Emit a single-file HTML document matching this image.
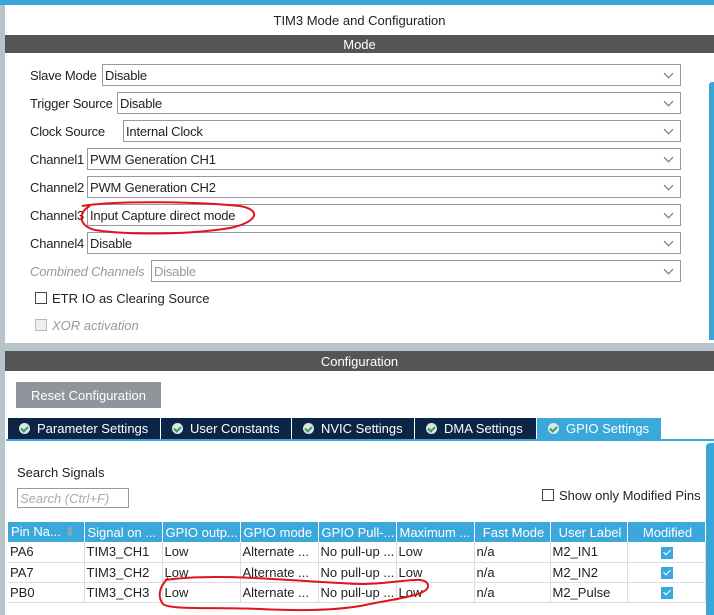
<!DOCTYPE html>
<html><head><style>
*{box-sizing:border-box;margin:0;padding:0}
body{width:714px;height:615px;overflow:hidden;background:#b9c4ca;font-family:"Liberation Sans",Arial,sans-serif;font-size:13px;color:#222;position:relative}
.a{position:absolute}
.hdr{background:#545655;color:#fff;text-align:center;font-size:13px}
.lbl{position:absolute;left:30px;font-size:13px;letter-spacing:-0.2px}
.sel{position:absolute;height:22px;border:1px solid #999;background:#fff;padding-left:2px;line-height:21px;right:33px;letter-spacing:-0.2px}
.sel:after{content:"";position:absolute;right:8px;top:5px;width:6px;height:6px;border-right:1px solid #666;border-bottom:1px solid #666;transform:rotate(45deg)}
.tab{position:absolute;top:418px;height:21px;background:#0c2546;color:#fff;line-height:21px;font-size:13px;padding-left:29px}
.tab i{position:absolute;left:11px;top:5px;width:11px;height:11px;border-radius:50%;background:#d8e8e0}
.tab i:after{content:"";position:absolute;left:3px;top:2px;width:3px;height:5px;border-right:2px solid #3a9a6a;border-bottom:2px solid #3a9a6a;transform:rotate(45deg)}
table{position:absolute;left:8px;top:522px;border-collapse:collapse;font-size:13px;table-layout:fixed}
th{background:#3ba8dc;color:#fff;font-weight:normal;height:20px;border-right:1px solid #fff;text-align:left;padding-left:3px;white-space:nowrap;overflow:hidden}
td{height:20px;border-right:1px solid #ddd;border-bottom:1px solid #ddd;padding-left:2px;white-space:nowrap;overflow:hidden}
.ck{display:inline-block;width:12px;height:12px;background:#3ba8dc;position:relative;vertical-align:middle}
.ck:after{content:"";position:absolute;left:4px;top:1px;width:3px;height:6px;border-right:1.5px solid #fff;border-bottom:1.5px solid #fff;transform:rotate(45deg)}
</style></head><body>
<div class="a" style="left:0;top:0;width:714px;height:5px;background:#3aa6d8"></div>
<div class="a" style="left:5px;top:5px;width:709px;height:338px;background:#fff"></div>
<div class="a" style="left:5px;top:13px;width:709px;text-align:center;font-size:13px">TIM3 Mode and Configuration</div>
<div class="a hdr" style="left:5px;top:35px;width:709px;height:18px;line-height:19px">Mode</div>
<div class="a" style="left:709px;top:82px;width:5px;height:258px;background:#3aa6d8;border-radius:3px 0 0 0"></div>

<div class="lbl" style="top:68px">Slave Mode</div><div class="sel" style="left:102px;top:64px">Disable</div>
<div class="lbl" style="top:96px">Trigger Source</div><div class="sel" style="left:117px;top:92px">Disable</div>
<div class="lbl" style="top:124px">Clock Source</div><div class="sel" style="left:123px;top:120px">Internal Clock</div>
<div class="lbl" style="top:152px">Channel1</div><div class="sel" style="left:87px;top:148px">PWM Generation CH1</div>
<div class="lbl" style="top:180px">Channel2</div><div class="sel" style="left:87px;top:176px">PWM Generation CH2</div>
<div class="lbl" style="top:208px">Channel3</div><div class="sel" style="left:87px;top:204px">Input Capture direct mode</div>
<div class="lbl" style="top:236px">Channel4</div><div class="sel" style="left:87px;top:232px">Disable</div>
<div class="lbl" style="top:264px;color:#999;font-style:italic">Combined Channels</div><div class="sel" style="left:151px;top:260px;color:#999">Disable</div>
<div class="a" style="left:35px;top:292px;width:12px;height:12px;border:1px solid #444"></div>
<div class="a" style="left:52px;top:291px">ETR IO as Clearing Source</div>
<div class="a" style="left:35px;top:319px;width:12px;height:12px;border:1px solid #bbb;background:#eee"></div>
<div class="a" style="left:52px;top:318px;color:#999;font-style:italic">XOR activation</div>

<div class="a" style="left:5px;top:351px;width:709px;height:264px;background:#fff"></div>
<div class="a hdr" style="left:5px;top:351px;width:709px;height:20px;line-height:21px">Configuration</div>
<div class="a" style="left:16px;top:382px;width:145px;height:26px;background:#8f959b;color:#fff;line-height:27px;text-align:center">Reset Configuration</div>
<div class="tab" style="left:8px;width:152px"><i></i>Parameter Settings</div>
<div class="tab" style="left:161px;width:130px"><i></i>User Constants</div>
<div class="tab" style="left:292px;width:122px"><i></i>NVIC Settings</div>
<div class="tab" style="left:415px;width:121px"><i></i>DMA Settings</div>
<div class="tab" style="left:537px;width:124px;background:#3ba8dc;height:22px"><i></i>GPIO Settings</div>
<div class="a" style="left:6px;top:439px;width:708px;height:2px;background:#3ba8dc"></div>
<div class="a" style="left:706px;top:443px;width:8px;height:172px;background:#3aa6d8;border-radius:4px 0 0 0"></div>
<div class="a" style="left:17px;top:465px">Search Signals</div>
<div class="a" style="left:17px;top:488px;width:112px;height:20px;border:1px solid #999;color:#aaa;font-style:italic;padding-left:2px;line-height:19px">Search (Ctrl+F)</div>
<div class="a" style="left:542px;top:489px;width:12px;height:12px;border:1px solid #444"></div>
<div class="a" style="left:559px;top:488px">Show only Modified Pins</div>
<table>
<tr><th style="width:76px">Pin Na... <span style="color:#8ab">⬍</span></th><th style="width:78px">Signal on ...</th><th style="width:78px">GPIO outp...</th><th style="width:78px">GPIO mode</th><th style="width:78px">GPIO Pull-...</th><th style="width:78px">Maximum ...</th><th style="width:76px;text-align:center">Fast Mode</th><th style="width:77px;text-align:center">User Label</th><th style="width:78px;text-align:center">Modified</th></tr>
<tr><td>PA6</td><td>TIM3_CH1</td><td>Low</td><td>Alternate ...</td><td>No pull-up ...</td><td>Low</td><td>n/a</td><td>M2_IN1</td><td style="text-align:center"><span class="ck"></span></td></tr>
<tr><td>PA7</td><td>TIM3_CH2</td><td>Low</td><td>Alternate ...</td><td>No pull-up ...</td><td>Low</td><td>n/a</td><td>M2_IN2</td><td style="text-align:center"><span class="ck"></span></td></tr>
<tr><td>PB0</td><td>TIM3_CH3</td><td>Low</td><td>Alternate ...</td><td>No pull-up ...</td><td>Low</td><td>n/a</td><td>M2_Pulse</td><td style="text-align:center"><span class="ck"></span></td></tr>
</table>
<svg class="a" style="left:0;top:0" width="714" height="615" fill="none" stroke="#e0141c" stroke-width="2">
<path d="M82 206 C120 200 200 202 240 206 C262 210 258 222 230 228 C180 236 120 234 95 230 C78 226 78 212 90 206"/>
<path d="M165 580 C220 572 300 582 360 584 C400 584 425 574 428 585 C430 595 400 598 370 604 C340 611 300 611 260 609 C210 607 170 610 163 604 C158 598 158 588 168 578"/>
</svg>
</body></html>
